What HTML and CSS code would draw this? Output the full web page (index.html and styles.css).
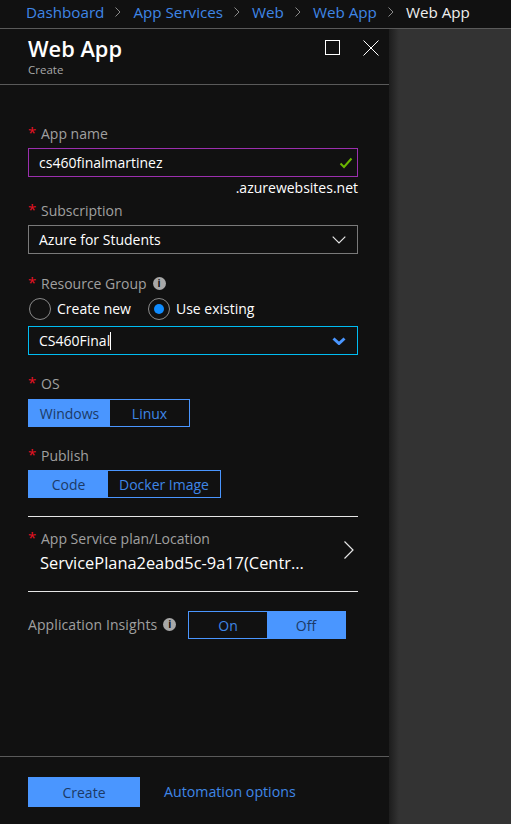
FILE: index.html
```html
<!DOCTYPE html>
<html lang="en">
<head>
    <meta charset="UTF-8">
    <meta name="viewport" content="width=device-width, initial-scale=1.0">
    <title>Web App - Create</title>
    <link rel="stylesheet" href="styles.css">
</head>
<body>
    <nav class="crumbs">
        <a>Dashboard</a>
        <svg class="crumb-sep" viewBox="0 0 8 12"><path d="M1.5 1.5 6 6l-4.5 4.5"/></svg>
        <a>App Services</a>
        <svg class="crumb-sep" viewBox="0 0 8 12"><path d="M1.5 1.5 6 6l-4.5 4.5"/></svg>
        <a>Web</a>
        <svg class="crumb-sep" viewBox="0 0 8 12"><path d="M1.5 1.5 6 6l-4.5 4.5"/></svg>
        <a>Web App</a>
        <svg class="crumb-sep" viewBox="0 0 8 12"><path d="M1.5 1.5 6 6l-4.5 4.5"/></svg>
        <span class="crumb-current">Web App</span>
    </nav>

    <div class="stage">
        <section class="panel">
            <header class="panel-head">
                <div>
                    <h1 class="panel-title">Web App</h1>
                    <div class="panel-sub">Create</div>
                </div>
                <div class="panel-actions">
                    <svg class="action-icon" viewBox="0 0 16 16"><rect x="0.5" y="0.5" width="14" height="14"/></svg>
                    <svg class="action-icon" viewBox="0 0 16 16"><path d="M0.5 0.5 15.5 15.5M15.5 0.5 0.5 15.5"/></svg>
                </div>
            </header>

            <form class="panel-body">
                <div class="field field-first">
                    <div class="label"><span class="star">*</span>App name</div>
                    <div class="box box-valid">
                        <span>cs460finalmartinez</span>
                        <svg class="check" viewBox="0 0 14 12"><path d="M1.5 6.5 5 10l7.5-8.500"/></svg>
                    </div>
                    <div class="suffix">.azurewebsites.net</div>
                </div>

                <div class="field field-sub">
                    <div class="label"><span class="star">*</span>Subscription</div>
                    <div class="box">
                        <span>Azure for Students</span>
                        <svg class="chevron" viewBox="0 0 14 8"><path d="M0.700 0.700 7 7l6.300-6.300"/></svg>
                    </div>
                </div>

                <div class="field field-group">
                    <div class="label"><span class="star">*</span>Resource Group<span class="info">i</span></div>
                    <div class="radios">
                        <span class="radio"></span><span class="radio-text">Create new</span>
                        <span class="radio radio-on"></span><span class="radio-text">Use existing</span>
                    </div>
                    <div class="box box-focus">
                        <span>CS460Final<span class="caret"></span></span>
                        <svg class="chevron chevron-blue" viewBox="0 0 14 8"><path d="M1.500 1.500 7 6.500l5.500-5"/></svg>
                    </div>
                </div>

                <div class="field field-os">
                    <div class="label label-os"><span class="star">*</span>OS</div>
                    <div class="toggle">
                        <span class="toggle-item toggle-on os-win">Windows</span>
                        <span class="toggle-item os-linux">Linux</span>
                    </div>
                </div>

                <div class="field field-publish">
                    <div class="label"><span class="star">*</span>Publish</div>
                    <div class="toggle">
                        <span class="toggle-item toggle-on pub-code">Code</span>
                        <span class="toggle-item pub-docker">Docker Image</span>
                    </div>
                </div>

                <div class="plan">
                    <div>
                        <div class="label plan-label"><span class="star">*</span>App Service plan/Location</div>
                        <div class="plan-value">ServicePlana2eabd5c-9a17(Centr...</div>
                    </div>
                    <svg class="plan-arrow" viewBox="0 0 10 18"><path d="M0.500 0.500 9 9l-8.500 8.500"/></svg>
                </div>

                <div class="insights">
                    <div class="label insights-label">Application Insights<span class="info">i</span></div>
                    <div class="toggle">
                        <span class="toggle-item ins-item">On</span>
                        <span class="toggle-item toggle-on ins-item">Off</span>
                    </div>
                </div>
            </form>

            <footer class="panel-foot">
                <button type="button" class="create-btn">Create</button>
                <a class="auto-link">Automation options</a>
            </footer>
        </section>
        <div class="backdrop"></div>
    </div>
</body>
</html>
```

FILE: styles.css
```css
body {
    margin: 0;
    height: 824px;
    overflow: hidden;
    display: flex;
    flex-direction: column;
    background-color: #111;
    color: #fff;
    font-family: "Open Sans", "Noto Sans", Arial, sans-serif;
    font-size: 14px;
}
.crumbs {
    height: 23px;
    border-bottom: 1px solid #5a5a5a;
    display: flex;
    align-items: center;
    padding: 0 0 5px 26px;
    font-size: 15.200px;
    color: #3f86e6;
    white-space: nowrap;
}
.crumb-sep {
    width: 8px;
    height: 12px;
    margin: 0 11px 0 10px;
    fill: none;
    stroke: #8a8a8a;
    stroke-width: 1;
}
.crumb-current {
    color: #eee;
}
.stage {
    flex: 1;
    display: flex;
    min-height: 0;
}
.panel {
    width: 389px;
    display: flex;
    flex-direction: column;
    background-color: #111;
}
.backdrop {
    flex: 1;
    background: linear-gradient(to right, #1d1d1d 0, #333 10px);
}
.panel-head {
    height: 55px;
    border-bottom: 1px solid #5a5a5a;
    display: flex;
    justify-content: space-between;
    padding: 0 10px 0 28px;
}
.panel-title {
    margin: 5px 0 0;
    font-size: 21.800px;
    line-height: 29px;
    font-weight: 600;
}
.panel-sub {
    font-size: 11.500px;
    line-height: 14px;
    color: #a8a8a8;
}
.panel-actions {
    display: flex;
    gap: 22px;
    padding-top: 11px;
}
.action-icon {
    width: 16px;
    height: 16px;
    fill: none;
    stroke: #fff;
    stroke-width: 1;
}
.panel-body {
    padding: 0 31px 0 28px;
    flex: 1;
}
.field-first { margin-top: 39px; }
.field-sub { margin-top: 3px; }
.field-group { margin-top: 20px; }
.field-os { margin-top: 19px; }
.field-publish { margin-top: 19px; }
.label {
    display: flex;
    align-items: center;
    box-sizing: border-box;
    height: 20px;
    padding-bottom: 2px;
    margin-bottom: 4px;
    color: #a0a0a0;
    font-size: 14px;
}
.label-os {
    margin-bottom: 5px;
}
.star {
    color: #e81123;
    width: 13px;
    font-size: 15px;
    position: relative;
    top: -1px;
}
.info {
    width: 13px;
    height: 13px;
    margin-left: 6px;
    border-radius: 50%;
    background-color: #a8a8a8;
    color: #111;
    font-size: 10px;
    line-height: 13px;
    font-weight: 700;
    text-align: center;
}
.box {
    height: 29px;
    box-sizing: border-box;
    border: 1px solid #7a7a7a;
    display: flex;
    align-items: center;
    justify-content: space-between;
    padding: 0 10px;
    font-size: 14px;
    color: #fff;
}
.box-valid {
    border-color: #9b2fae;
    padding-right: 4px;
}
.box-focus {
    border-color: #00bcf2;
}
.check {
    width: 14px;
    height: 12px;
    fill: none;
    stroke: #6bb700;
    stroke-width: 2;
}
.chevron {
    width: 14px;
    height: 8px;
    margin-right: 1px;
    fill: none;
    stroke: #e6e6e6;
    stroke-width: 1.200;
}
.chevron-blue {
    stroke: #4a96ff;
    stroke-width: 3;
}
.suffix {
    height: 20px;
    line-height: 20px;
    margin-top: 1px;
    text-align: right;
    color: #fff;
    font-size: 14px;
}
.radios {
    display: flex;
    align-items: center;
    height: 22px;
    margin-bottom: 6px;
    padding-left: 1px;
}
.radio {
    width: 20px;
    height: 20px;
    border: 1px solid #8a8a8a;
    border-radius: 50%;
    display: flex;
    align-items: center;
    justify-content: center;
}
.radio-on::after {
    content: "";
    width: 10px;
    height: 10px;
    border-radius: 50%;
    background-color: #0f8cff;
}
.radio-text {
    margin: 0 17px 2px 6px;
    color: #fff;
    font-size: 14px;
}
.caret {
    display: inline-block;
    width: 1px;
    height: 18px;
    background-color: #fff;
    vertical-align: -4px;
}
.toggle {
    display: inline-flex;
    border: 1px solid #4a96ff;
    height: 28px;
    box-sizing: border-box;
    vertical-align: top;
}
.toggle-item {
    display: flex;
    align-items: center;
    justify-content: center;
    color: #3f86e6;
    font-size: 14px;
}
.toggle-on {
    background-color: #4a96ff;
    color: #1c3a66;
}
.os-win { width: 81px; }
.os-linux { width: 79px; }
.pub-code { width: 79px; }
.pub-docker { width: 112px; }
.ins-item { width: 78px; }
.plan {
    margin-top: 18px;
    height: 62px;
    border-top: 1px solid #e6e6e6;
    border-bottom: 1px solid #e6e6e6;
    display: flex;
    align-items: flex-start;
    justify-content: space-between;
    padding-top: 12px;
}
.plan-label {
    margin-bottom: 3px;
}
.plan-value {
    padding-left: 12px;
    font-size: 16.400px;
    line-height: 22px;
    white-space: nowrap;
}
.plan-arrow {
    width: 10px;
    height: 18px;
    margin: 12px 4px 0 0;
    fill: none;
    stroke: #e6e6e6;
    stroke-width: 1.200;
}
.insights {
    margin-top: 19px;
    display: flex;
    align-items: center;
}
.insights-label {
    width: 160px;
    margin-bottom: 0;
    letter-spacing: 0.100px;
}
.panel-foot {
    height: 47px;
    border-top: 1px solid #5a5a5a;
    display: flex;
    align-items: flex-start;
    padding: 20px 0 0 28px;
}
.create-btn {
    width: 112px;
    height: 30px;
    border: none;
    padding: 0;
    background-color: #4a96ff;
    color: #1c3a66;
    font: inherit;
}
.auto-link {
    margin-left: 24px;
    line-height: 30px;
    color: #3f86e6;
    font-size: 14.200px;
}
```
